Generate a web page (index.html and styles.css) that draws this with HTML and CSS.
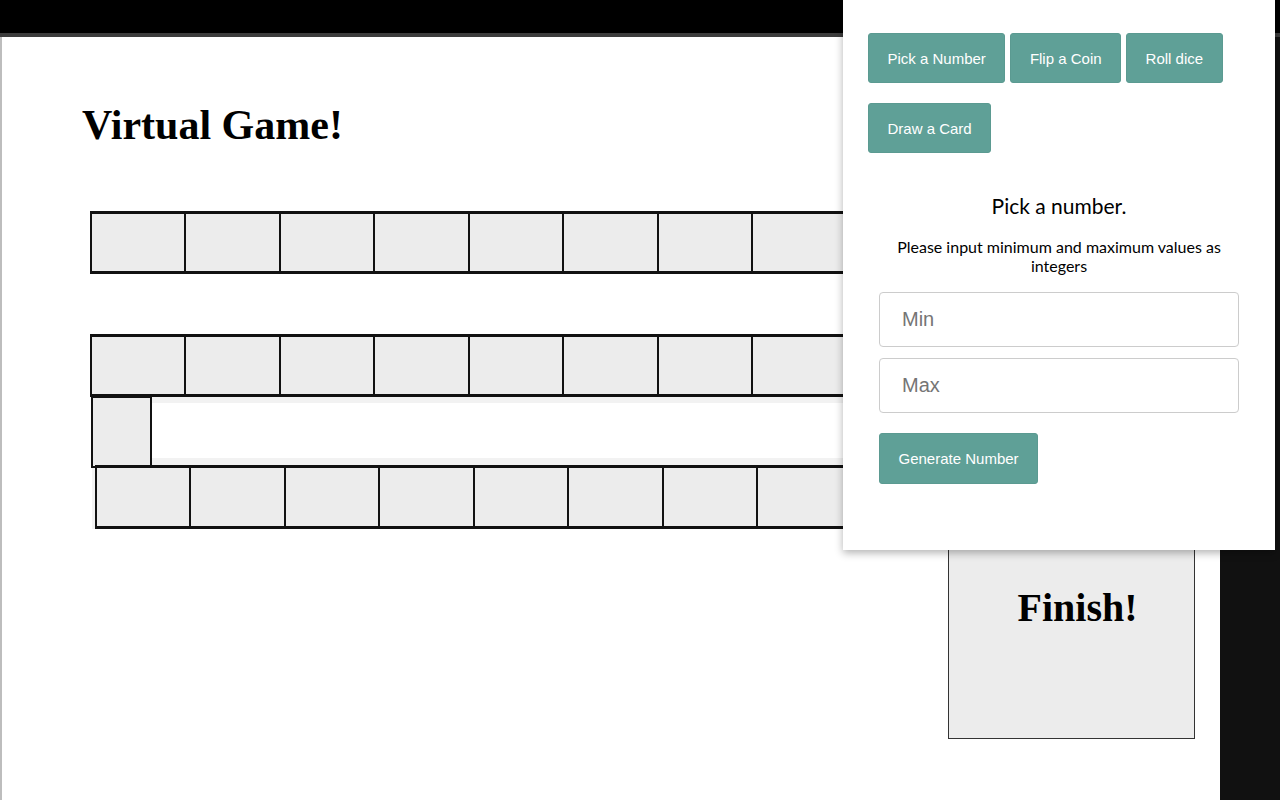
FILE: index.html
```html
<!DOCTYPE html>
<html lang="en">
<head>
    <meta charset="UTF-8">
    <meta name="viewport" content="width=device-width, initial-scale=1.0">
    <title>Virtual Game</title>
    <link rel="stylesheet" href="styles.css">
</head>
<body>
    <div class="topbar"></div>
    <div class="window">
        <div class="page">
            <h1>Virtual Game!</h1>
            <div class="board-area">
                <div class="board">
                    <div class="row">
                        <div class="square"></div><div class="square"></div><div class="square"></div>
                        <div class="square"></div><div class="square"></div><div class="square"></div>
                        <div class="square"></div><div class="square"></div><div class="square"></div>
                    </div>
                    <div class="row row-two">
                        <div class="square"></div><div class="square"></div><div class="square"></div>
                        <div class="square"></div><div class="square"></div><div class="square"></div>
                        <div class="square"></div><div class="square"></div><div class="square"></div>
                    </div>
                    <div class="bend">
                        <div class="bend-square"></div>
                    </div>
                    <div class="row row-three">
                        <div class="square"></div><div class="square"></div><div class="square"></div>
                        <div class="square"></div><div class="square"></div><div class="square"></div>
                        <div class="square"></div><div class="square"></div><div class="square"></div>
                    </div>
                </div>
                <div class="finish">Finish!</div>
            </div>
        </div>
    </div>

    <div class="popup">
        <div class="tabs">
            <button class="btn">Pick a Number</button>
            <button class="btn">Flip a Coin</button>
            <button class="btn">Roll dice</button>
            <button class="btn">Draw a Card</button>
        </div>
        <div class="picker">
            <h3>Pick a number.</h3>
            <p>Please input minimum and maximum values as integers</p>
            <input type="text" class="field" placeholder="Min">
            <input type="text" class="field" placeholder="Max">
            <button class="btn generate">Generate Number</button>
        </div>
    </div>
</body>
</html>
```

FILE: styles.css
```css
body {
    margin: 0;
    padding: 0;
    background: #111;
    font-family: "Liberation Sans", Arial, sans-serif;
}
.topbar {
    height: 33px;
    background: #000;
    border-bottom: 4px solid #3c3c3c;
}
.window {
    display: flex;
}
.page {
    width: 1220px;
    height: 763px;
    box-sizing: border-box;
    background: #fff;
    border-left: 2px solid #bdbdbd;
}
h1 {
    font-family: "Liberation Serif", "Times New Roman", serif;
    font-size: 42px;
    line-height: 50px;
    margin: 63px 0 0 80px;
}
.board-area {
    display: flex;
    align-items: flex-start;
    margin-top: 61px;
    padding-left: 88px;
}
.row {
    display: flex;
}
.square {
    width: 96px;
    height: 63px;
    box-sizing: border-box;
    flex-shrink: 0;
    margin-right: -2px;
    background: #ececec;
    border: 2px solid #111;
    border-top-width: 3px;
    border-bottom-width: 3px;
}
.square:nth-child(even) {
    width: 97px;
}
.row-two {
    margin-top: 60px;
}
.bend {
    display: flex;
    align-items: flex-start;
    height: 68px;
    margin-left: 2px;
    background: linear-gradient(#f2f2f2 0 6px, #fff 6px 61px, #f2f2f2 61px);
}
.bend-square {
    width: 61px;
    height: 74px;
    box-sizing: border-box;
    flex-shrink: 0;
    margin: -3px 0 0 -1px;
    background: #ececec;
    border: 2px solid #111;
    border-top-width: 4px;
}
.row-three {
    margin-left: 2px;
    padding-left: 3px;
    background: #f2f2f2;
}
.row-three .square {
    height: 64px;
}
.finish {
    width: 247px;
    height: 250px;
    box-sizing: border-box;
    margin: 278px 0 0 3px;
    padding: 95px 0 0 12px;
    background: #ececec;
    border: 1px solid #333;
    text-align: center;
    font-family: "Liberation Serif", "Times New Roman", serif;
    font-weight: bold;
    font-size: 40px;
    line-height: 46px;
}

/* game picker overlay */
.popup {
    position: absolute;
    top: 0;
    left: 843px;
    width: 432px;
    height: 550px;
    box-sizing: border-box;
    padding: 33px 36px 0 25px;
    background: #fff;
    box-shadow: 0 3px 8px rgba(0,0,0,0.3);
}
.tabs {
    display: flex;
    flex-wrap: wrap;
    gap: 20px 5px;
    width: 360px;
}
.btn {
    height: 50px;
    padding: 0 18.5px;
    background: #5fa097;
    color: #fff;
    border: 1px solid #5b9a91;
    border-radius: 3px;
    font-family: "Liberation Sans", Arial, sans-serif;
    font-size: 15px;
    cursor: pointer;
}
.picker {
    margin-left: 11px;
    text-align: center;
    font-family: Lato, "Open Sans", sans-serif;
}
.picker h3 {
    font-size: 21px;
    font-weight: normal;
    line-height: 25px;
    margin: 40px 0 0;
}
.picker p {
    font-size: 16px;
    line-height: 19px;
    margin: 19px 0 0;
}
.field {
    display: block;
    width: 100%;
    height: 55px;
    box-sizing: border-box;
    margin-top: 11px;
    padding: 0 22px;
    border: 1px solid #ccc;
    border-radius: 4px;
    font-family: "Liberation Sans", Arial, sans-serif;
    font-size: 20px;
}
.picker p + .field {
    margin-top: 17px;
}
.field::placeholder {
    color: #757575;
}
.generate {
    display: block;
    height: 51px;
    margin-top: 20px;
}
```
